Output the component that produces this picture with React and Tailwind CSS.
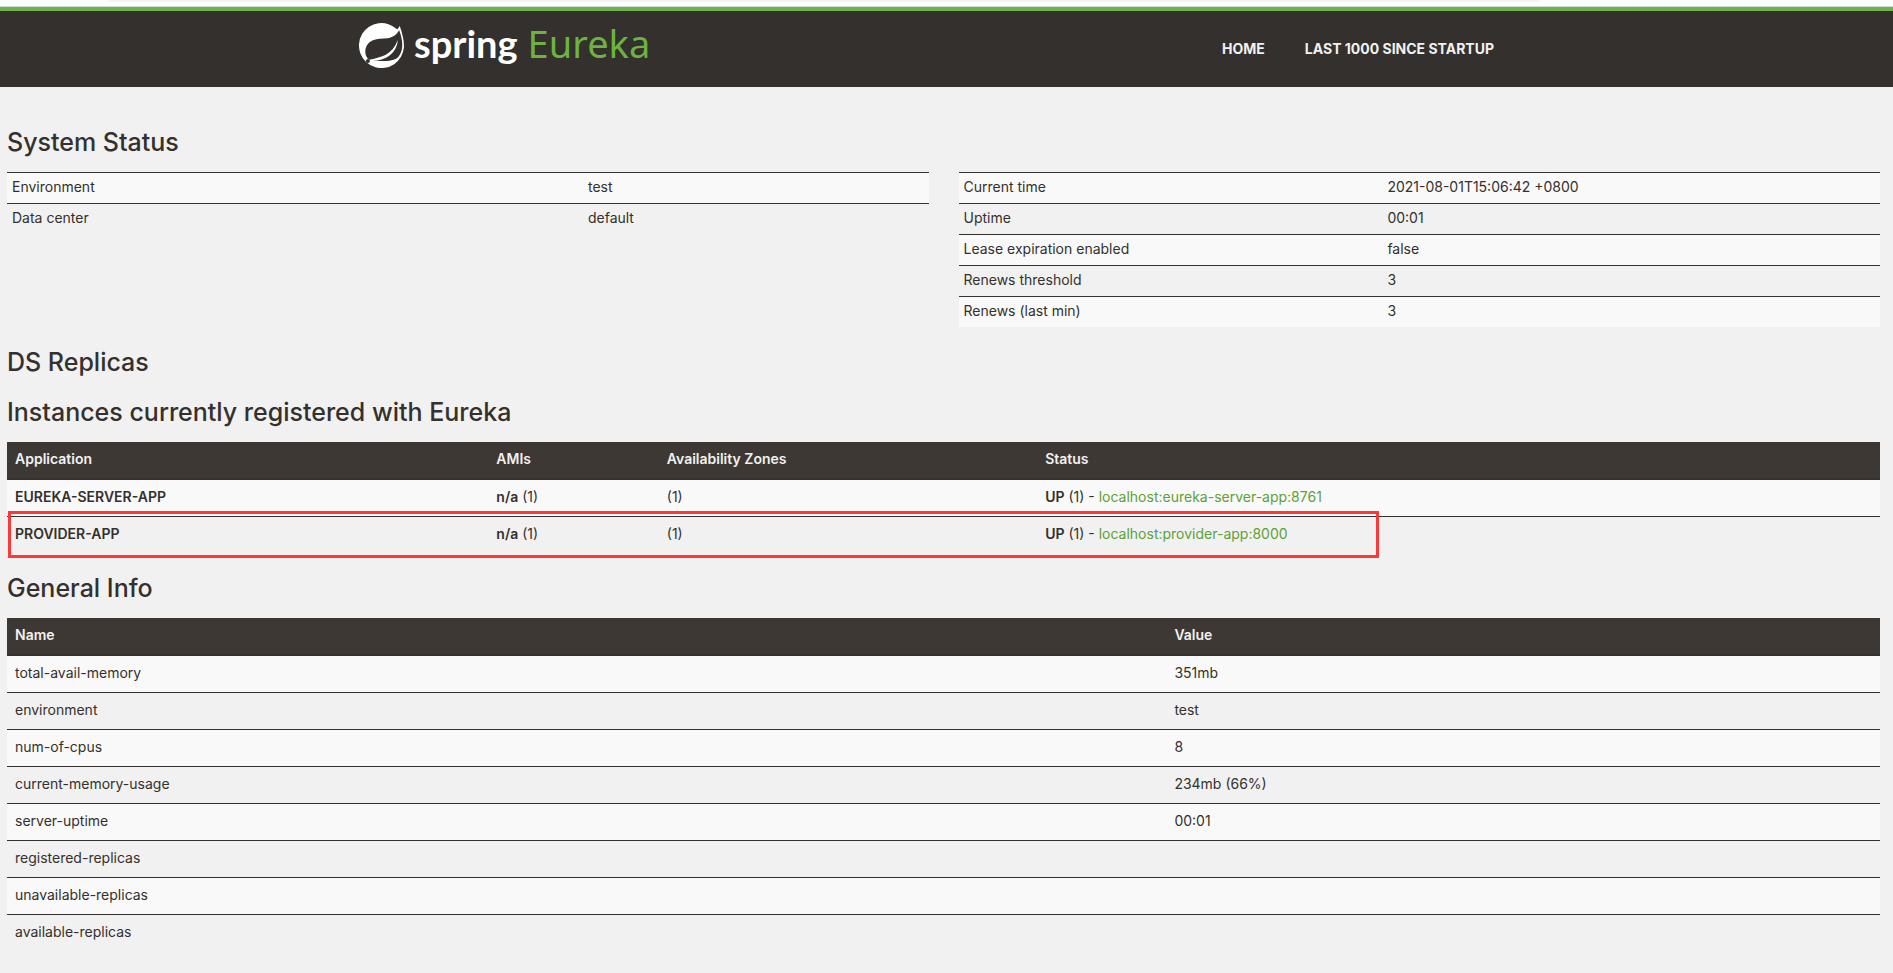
import React from 'react';

const environment = [
  ['Environment', 'test'],
  ['Data center', 'default'],
];

const status = [
  ['Current time', '2021-08-01T15:06:42 +0800'],
  ['Uptime', '00:01'],
  ['Lease expiration enabled', 'false'],
  ['Renews threshold', '3'],
  ['Renews (last min)', '3'],
];

const instances = [
  { name: 'EUREKA-SERVER-APP', url: 'localhost:eureka-server-app:8761' },
  { name: 'PROVIDER-APP', url: 'localhost:provider-app:8000', highlighted: true },
];

const generalInfo = [
  ['total-avail-memory', '351mb'],
  ['environment', 'test'],
  ['num-of-cpus', '8'],
  ['current-memory-usage', '234mb (66%)'],
  ['server-uptime', '00:01'],
  ['registered-replicas', ''],
  ['unavailable-replicas', ''],
  ['available-replicas', ''],
];

const Heading = ({ children }) => (
  <h1 className="mt-5 text-[25px] leading-[30px] font-medium">
    {children}
  </h1>
);

const Leaf = () => (
  <svg className="size-[45px]" viewBox="12 15 136 136" aria-hidden="true">
    <path
      fill="#fff"
      d="M135 23C133 28 130 32 127 34A68 68 0 1 0 147.8 88C149 70 143 46 135 23z"
    />
    <path
      fill="#34302d"
      d="M133 36C127 50 113 59 98 61C82 63 68 61 54 67C30 77 25 106 38 122L44 126C62 122 80 118 93 111C110 101 122 86 129 66C128 92 112 112 88 122C78 126 66 129 54 130C84 129 116 134 132 116C149 94 143 61 133 36z"
    />
    <circle cx="39" cy="130" r="6" fill="#34302d" />
  </svg>
);

const StatusTable = ({ rows, keyWidth, label }) => (
  <table aria-label={label} className="w-full table-fixed border-separate border-spacing-0">
    <colgroup>
      <col className={keyWidth} />
      <col />
    </colgroup>
    <tbody>
      {rows.map(([key, value]) => (
        <tr key={key} className="odd:bg-[#f9f9f9]">
          <td className="border-t border-[#34302d] px-[5px] pt-1 pb-[6px]">{key}</td>
          <td className="border-t border-[#34302d] px-[5px] pt-1 pb-[6px]">{value}</td>
        </tr>
      ))}
    </tbody>
  </table>
);

const TableHead = ({ columns }) => (
  <thead>
    <tr className="bg-[#3d3834] text-left text-[#f1f1f1]">
      {columns.map((column) => (
        <th key={column} scope="col" className="border-b-2 border-[#34302d] px-2 pt-[7px] pb-[9px] font-semibold">
          {column}
        </th>
      ))}
    </tr>
  </thead>
);

const Header = () => (
  <header className="border-t-4 border-[#6db33f] bg-[#34302d] pr-5">
    <div className="mx-auto flex h-[76px] max-w-[1155px] justify-between">
      <a href="#" className="flex items-start pt-3">
        <Leaf />
        <span className="ml-[10px] font-[Lato,sans-serif] text-[38px] leading-[40px] font-bold text-white">spring</span>
        <span className="ml-[10px] font-['Noto_Sans',sans-serif] text-[38px] leading-[40px] text-[#6db33f]">Eureka</span>
      </a>
      <nav className="flex items-center gap-10 pr-5 font-bold text-[#f1f1f1]">
        <a href="#">HOME</a>
        <a href="#">LAST 1000 SINCE STARTUP</a>
      </nav>
    </div>
  </header>
);

const App = () => {
  return (
    <div className="min-h-screen bg-[#f1f1f1] font-[Inter,sans-serif] text-[14px] leading-[20px] text-[#34302d]">
      {/* Bottom edge of the browser toolbar */}
      <div className="h-[7px] border-b border-[#d5dbe0] bg-white pr-[353px] pl-[107px]">
        <div className="h-[2px] rounded-b-sm bg-[#f1f3f4]" />
      </div>

      <Header />

      <main className="pt-5 pr-[13px] pl-[7px]">
        <Heading>System Status</Heading>
        <div className="mt-[15px] grid grid-cols-2 items-start gap-[30px]">
          <StatusTable rows={environment} keyWidth="w-[62.5%]" label="Environment" />
          <StatusTable rows={status} keyWidth="w-[46%]" label="Server status" />
        </div>

        <Heading>DS Replicas</Heading>

        <Heading>Instances currently registered with Eureka</Heading>
        <table className="mt-[15px] w-full table-fixed border-separate border-spacing-0">
          <colgroup>
            <col className="w-[25.7%]" />
            <col className="w-[9.1%]" />
            <col className="w-[20.2%]" />
            <col />
          </colgroup>
          <TableHead columns={['Application', 'AMIs', 'Availability Zones', 'Status']} />
          <tbody className="[&>tr+tr>td]:border-t [&>tr+tr>td]:border-[#34302d]">
            {instances.map(({ name, url, highlighted }) => (
              <tr key={name} className="relative odd:bg-[#f9f9f9]">
                <td className="px-2 pt-[7px] pb-[9px] font-semibold">
                  {name}
                  {highlighted && (
                    <span className="pointer-events-none absolute -top-[5px] left-px h-[47px] w-[73.2%] border-3 border-[#fd3838]" />
                  )}
                </td>
                <td className="px-2 pt-[7px] pb-[9px]"><b className="font-semibold">n/a</b> (1)</td>
                <td className="px-2 pt-[7px] pb-[9px]">(1)</td>
                <td className="px-2 pt-[7px] pb-[9px]">
                  <b className="font-semibold">UP</b> (1) - <a href="#" className="text-[#5fa134]">{url}</a>
                </td>
              </tr>
            ))}
          </tbody>
        </table>

        <Heading>General Info</Heading>
        <table className="mt-[15px] w-full table-fixed border-separate border-spacing-0">
          <colgroup>
            <col className="w-[61.9%]" />
            <col />
          </colgroup>
          <TableHead columns={['Name', 'Value']} />
          <tbody className="[&>tr+tr>td]:border-t [&>tr+tr>td]:border-[#34302d]">
            {generalInfo.map(([name, value]) => (
              <tr key={name} className="odd:bg-[#f9f9f9]">
                <td className="px-2 pt-[7px] pb-[9px]">{name}</td>
                <td className="px-2 pt-[7px] pb-[9px]">{value}</td>
              </tr>
            ))}
          </tbody>
        </table>
      </main>
    </div>
  );
};

export default App;
